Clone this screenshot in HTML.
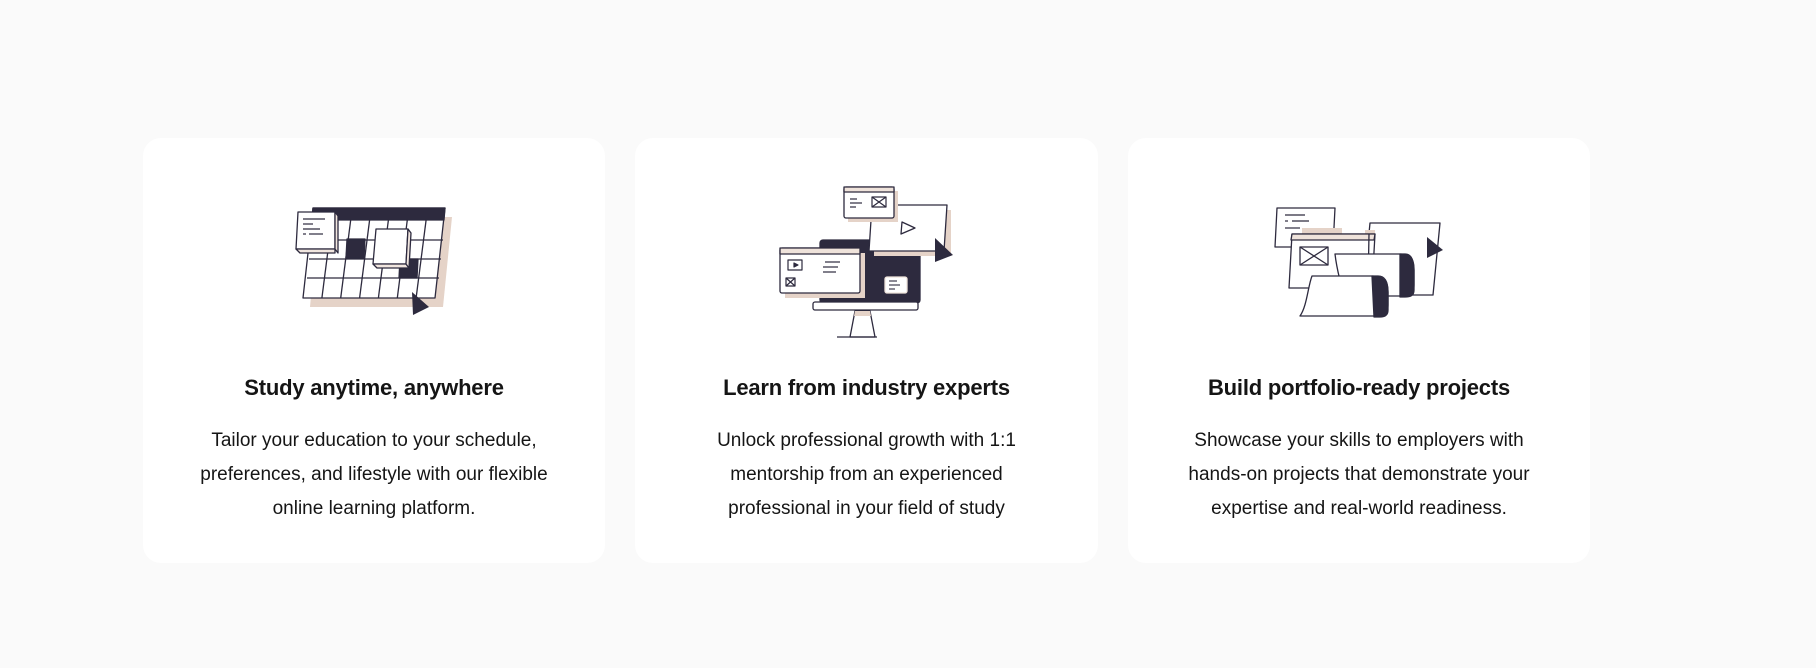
<!DOCTYPE html>
<html><head><meta charset="utf-8"><style>
html,body{margin:0;padding:0;background:#fafafa;width:1816px;height:668px;overflow:hidden;font-family:"Liberation Sans",sans-serif;color:#151515}
.card{position:absolute;top:138px;height:425px;background:#fff;border-radius:18px}
.t{position:absolute;left:0;right:0;top:375px;text-align:center;font-size:22px;font-weight:bold;letter-spacing:-0.2px}
.b{position:absolute;left:0;right:0;top:424px;text-align:center;font-size:19px;line-height:34px}
svg{position:absolute;left:0;top:0}
</style></head><body>
<div class="card" style="left:143px;width:462px"></div>
<div class="card" style="left:635px;width:463px"></div>
<div class="card" style="left:1128px;width:462px"></div>
<div class="t" style="left:143px;width:462px;right:auto">Study anytime, anywhere</div>
<div class="b" style="left:143px;width:462px;right:auto">Tailor your education to your schedule,<br>preferences, and lifestyle with our flexible<br>online learning platform.</div>
<div class="t" style="left:635px;width:463px;right:auto">Learn from industry experts</div>
<div class="b" style="left:635px;width:463px;right:auto">Unlock professional growth with 1:1<br>mentorship from an experienced<br>professional in your field of study</div>
<div class="t" style="left:1128px;width:462px;right:auto">Build portfolio-ready projects</div>
<div class="b" style="left:1128px;width:462px;right:auto">Showcase your skills to employers with<br>hands-on projects that demonstrate your<br>expertise and real-world readiness.</div>
<svg width="1816" height="668" viewBox="0 0 1816 668" fill="none" stroke="#2d2a3e" stroke-width="1.3" stroke-linejoin="round">
<!-- card1 -->
<polygon points="318,217 452,217 443,307 310,307" fill="#e5d3c8" stroke="none"/>
<polygon points="313,208 445,208 435,298 303,298" fill="#fff"/>
<polygon points="313,208 445,208 444,220 312,220" fill="#2d2a3e"/>
<polygon points="347,239 365,239 364,258 346,258" fill="#2d2a3e"/>
<polygon points="400,259 418,259 417,278 399,278" fill="#2d2a3e"/>
<g>
<line x1="311" y1="240" x2="443" y2="240"/><line x1="309" y1="259" x2="441" y2="259"/><line x1="307" y1="278" x2="439" y2="278"/>
<line x1="331.9" y1="220" x2="321.9" y2="298"/><line x1="350.7" y1="220" x2="340.7" y2="298"/><line x1="369.6" y1="220" x2="359.6" y2="298"/><line x1="388.4" y1="220" x2="378.4" y2="298"/><line x1="407.3" y1="220" x2="397.3" y2="298"/><line x1="426.1" y1="220" x2="416.1" y2="298"/>
</g>
<polygon points="298,212 335,212 335,249 296,249" fill="#fff"/>
<polygon points="296,249 335,249 335,253 300,253" fill="#f1e6df"/>
<polygon points="335,212 338,216 338,253 335,249" fill="#f1e6df"/>
<g stroke-width="1.2"><line x1="303" y1="219" x2="325" y2="219"/><line x1="303" y1="224" x2="313" y2="224"/><line x1="303" y1="229" x2="320" y2="229"/><line x1="303" y1="234" x2="306" y2="234"/><line x1="309" y1="234" x2="323" y2="234"/></g>
<polygon points="376,229 408,229 406,264 373,264" fill="#fff"/>
<polygon points="373,264 406,264 409,268 377,268" fill="#f1e6df"/>
<polygon points="408,229 411,233 409,268 406,264" fill="#f1e6df"/>
<polygon points="412,292 429,307 413,315" fill="#2d2a3e" stroke="none"/>
<!-- card2 -->
<rect x="820" y="240" width="100" height="63" rx="3" fill="#2d2a3e"/>
<rect x="813" y="302" width="105" height="8" rx="2" fill="#fff"/>
<polygon points="855,311 870,311 875,337 850,337" fill="#fff"/>
<polygon points="855,311 870,311 871,316 854,316" fill="#e5d3c8" stroke="none"/>
<line x1="837" y1="337" x2="877" y2="337"/>
<rect x="874" y="210" width="77" height="46" fill="#e5d3c8" stroke="none"/>
<polygon points="872,205 947,205 944,251 869,251" fill="#fff"/>
<polygon points="902,222 915,228 901,234" fill="#fff"/>
<polygon points="935,238 953,255 935,262" fill="#2d2a3e" stroke="none"/>
<rect x="848" y="191" width="50" height="31" fill="#e5d3c8" stroke="none"/>
<rect x="844" y="187" width="50" height="31" rx="2" fill="#fff"/>
<rect x="844" y="187" width="50" height="5" fill="#efe3db"/>
<g stroke-width="1.2"><line x1="850" y1="199" x2="857" y2="199"/><line x1="850" y1="203" x2="862" y2="203"/><line x1="850" y1="207" x2="856" y2="207"/><rect x="872" y="197" width="14" height="10"/><path d="M872 197L886 207M886 197L872 207"/></g>
<rect x="785" y="253" width="80" height="45" fill="#e5d3c8" stroke="none"/>
<rect x="780" y="248" width="80" height="45" rx="2" fill="#fff"/>
<rect x="780" y="248" width="80" height="6" fill="#efe3db"/>
<g stroke-width="1.2"><rect x="788" y="260" width="14" height="10"/><polygon points="794,263 798,265 794,267" fill="#2d2a3e"/><rect x="786" y="278" width="9" height="8"/><path d="M786 278L795 286M795 278L786 286"/><line x1="825" y1="262" x2="840" y2="262"/><line x1="823" y1="267" x2="838" y2="267"/><line x1="823" y1="272" x2="836" y2="272"/></g>
<rect x="885" y="277" width="22" height="16" rx="2" fill="#fff" stroke="#efe3db"/>
<g stroke-width="1.1"><line x1="889" y1="281" x2="897" y2="281"/><line x1="889" y1="285" x2="900" y2="285"/><line x1="889" y1="289" x2="895" y2="289"/></g>
<!-- card3 -->
<polygon points="1277,208 1335,208 1333,247 1275,247" fill="#fff"/>
<g stroke-width="1.2"><line x1="1285" y1="215" x2="1305" y2="215"/><line x1="1285" y1="221" x2="1288" y2="221"/><line x1="1292" y1="221" x2="1309" y2="221"/><line x1="1285" y1="228" x2="1300" y2="228"/></g>
<rect x="1302" y="228" width="40" height="8" fill="#e5d3c8" stroke="none"/>
<polygon points="1370,223 1440,223 1433,295 1363,295" fill="#fff"/>
<rect x="1365" y="230" width="10" height="8" fill="#e5d3c8" stroke="none"/>
<polygon points="1427,237 1443,250 1427,258" fill="#2d2a3e" stroke="none"/>
<polygon points="1292,234 1375,234 1372,288 1289,288" fill="#fff"/>
<polygon points="1292,234 1375,234 1374,240 1291,240" fill="#efe3db"/>
<line x1="1369" y1="234" x2="1368" y2="288"/>
<rect x="1300" y="247" width="28" height="18" fill="#fff"/><path d="M1300 247L1328 265M1328 247L1300 265"/>
<path d="M1335 254 L1405 254 C1412 254 1414 262 1414 270 L1414 285 C1414 292 1412 296 1406 296 L1340 296 C1345 290 1338 280 1335 254Z" fill="#fff"/>
<path d="M1400 254 C1412 254 1414 262 1414 270 L1414 290 C1414 296 1410 297 1405 297 L1400 297Z" fill="#2d2a3e"/>
<path d="M1312 276 L1378 276 C1386 276 1388 284 1388 292 L1388 305 C1388 312 1386 316 1380 316 L1300 316 C1307 306 1308 286 1312 276Z" fill="#fff"/>
<path d="M1372 276 C1386 276 1388 284 1388 292 L1388 310 C1388 316 1384 317 1380 317 L1374 317Z" fill="#2d2a3e"/>
</svg>
</body></html>
